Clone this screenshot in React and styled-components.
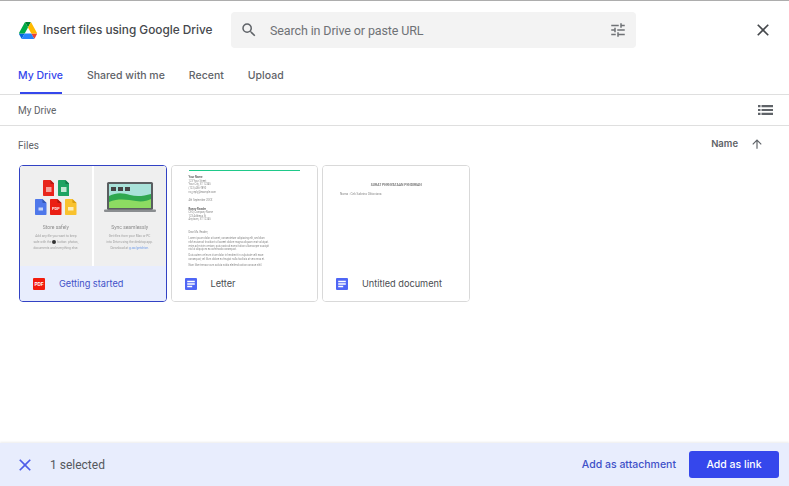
import React from "react";
import styled, { createGlobalStyle } from "styled-components";

const GlobalStyle = createGlobalStyle`
  html, body { margin: 0; padding: 0; background: #fff; }
  body { font-family: "Roboto", "Liberation Sans", sans-serif; }
`;

const tabs = ["My Drive", "Shared with me", "Recent", "Upload"];

const DriveLogo = () => (
  <svg width="18" height="17" viewBox="0 0 87.3 78" preserveAspectRatio="none">
    <path d="M6.6 66.85l3.85 6.65c.8 1.4 1.95 2.5 3.3 3.3L27.5 53H0c0 1.55.4 3.1 1.2 4.5z" fill="#0066da" />
    <path d="M43.65 25L29.9 1.2c-1.35.8-2.5 1.9-3.3 3.3L1.2 48.5A9 9 0 0 0 0 53h27.5z" fill="#00ac47" />
    <path d="M73.55 76.8c1.35-.8 2.5-1.9 3.3-3.3l1.6-2.75L86.1 57.5c.8-1.4 1.2-2.95 1.2-4.5H59.8l5.85 11.5z" fill="#ea4335" />
    <path d="M43.65 25L57.4 1.2C56.05.4 54.5 0 52.9 0H34.4c-1.6 0-3.15.45-4.5 1.2z" fill="#00832d" />
    <path d="M59.8 53H27.5L13.75 76.8c1.35.8 2.9 1.2 4.5 1.2h50.8c1.6 0 3.15-.45 4.5-1.2z" fill="#2684fc" />
    <path d="M73.4 26.5L60.7 4.5c-.8-1.4-1.95-2.5-3.3-3.3L43.65 25 59.8 53h27.45c0-1.55-.4-3.1-1.2-4.5z" fill="#ffba00" />
  </svg>
);

const SearchIcon = () => (
  <svg width="18" height="18" viewBox="0 0 24 24" fill="#5f6368">
    <path d="M15.5 14h-.79l-.28-.27A6.47 6.47 0 0 0 16 9.5 6.5 6.5 0 1 0 9.5 16c1.61 0 3.09-.59 4.23-1.57l.27.28v.79l5 4.99L20.49 19l-4.99-5zm-6 0C7.01 14 5 11.99 5 9.5S7.01 5 9.5 5 14 7.01 14 9.5 11.99 14 9.5 14z" />
  </svg>
);

const TuneIcon = () => (
  <svg width="18" height="18" viewBox="0 0 24 24" fill="#6f7276">
    <path d="M3 17v2h6v-2H3zM3 5v2h10V5H3zm10 16v-2h8v-2h-8v-2h-2v6h2zM7 9v2H3v2h4v2h2V9H7zm14 4v-2H11v2h10zm-6-4h2V7h4V5h-4V3h-2v6z" />
  </svg>
);

const CloseIcon = ({ color, size }) => (
  <svg width={size} height={size} viewBox="0 0 24 24" fill={color}>
    <path d="M19 6.41L17.59 5 12 10.59 6.41 5 5 6.41 10.59 12 5 17.59 6.41 19 12 13.41 17.59 19 19 17.59 13.41 12z" />
  </svg>
);

const ListIcon = () => (
  <svg width="15" height="10" viewBox="0 0 15 10" fill="#5f6368">
    <path d="M0 0h2.5v2.2H0zM3.5 0H15v2.2H3.5zM0 3.9h2.5v2.2H0zM3.5 3.9H15v2.2H3.5zM0 7.8h2.5V10H0zM3.5 7.8H15V10H3.5z" />
  </svg>
);

const ArrowUpIcon = () => (
  <svg width="14" height="14" viewBox="0 0 24 24" fill="#5f6368">
    <path d="M4 12l1.41 1.41L11 7.83V20h2V7.83l5.58 5.59L20 12l-8-8-8 8z" />
  </svg>
);

const DocIcon = () => (
  <svg width="12" height="12" viewBox="0 0 12 12">
    <rect width="12" height="12" rx="1" fill="#4f66f5" />
    <path d="M2.2 2.8h7.6v1.4H2.2zM2.2 5.3h7.6v1.4H2.2zM2.2 7.8h5v1.4h-5z" fill="#fff" />
  </svg>
);

const PdfIcon = () => (
  <svg width="12" height="12" viewBox="0 0 12 12">
    <rect width="12" height="12" rx="1" fill="#f21c0d" />
    <text x="6" y="7.8" textAnchor="middle" fontSize="4.6" fontWeight="700" fill="#fff" fontFamily="Liberation Sans">PDF</text>
  </svg>
);

const Sheet = ({ color, fold, children }) => (
  <svg width="11.5" height="16" viewBox="0 0 11.5 16">
    <path d="M.8 0h6.6l4.1 4.1v11.1a.8.8 0 0 1-.8.8H.8a.8.8 0 0 1-.8-.8V.8A.8.8 0 0 1 .8 0z" fill={color} />
    <path d="M7.4 0l4.1 4.1H8.2a.8.8 0 0 1-.8-.8z" fill={fold} />
    {children}
  </svg>
);

const LaptopArt = () => (
  <svg width="52" height="31" viewBox="0 0 52 31">
    <rect x="3" y="0" width="46" height="28" rx="1.5" fill="#5a5d60" />
    <rect x="5" y="2" width="42" height="24" fill="#a9e2d9" />
    <path d="M5 14c8-4 14-3 21-1s14 1 21-1v14H5z" fill="#2fa84f" />
    <path d="M5 20c10-4 19-2 27-1 6 1 11 0 15-2v9H5z" fill="#8ddb62" />
    <rect x="7" y="5" width="5" height="4" fill="#444" />
    <rect x="14" y="5" width="5" height="4" fill="#444" />
    <rect x="21" y="5" width="5" height="4" fill="#444" />
    <rect y="27.5" width="52" height="2.5" rx="1" fill="#8a8d90" />
  </svg>
);

const App = () => (
  <Page>
    <GlobalStyle />
    <Header>
      <Brand>
        <DriveLogo />
        <Title>Insert files using Google Drive</Title>
      </Brand>
      <Search>
        <SearchIcon />
        <SearchText>Search in Drive or paste URL</SearchText>
        <TuneIcon />
      </Search>
      <CloseButton><CloseIcon color="#45484c" size={20} /></CloseButton>
    </Header>

    <Tabs>
      {tabs.map((tab, i) => (
        <Tab key={tab} $active={i === 0}>{tab}</Tab>
      ))}
    </Tabs>

    <Crumbs>
      <CrumbText>My Drive</CrumbText>
      <ListIcon />
    </Crumbs>

    <Content>
      <SectionRow>
        <SectionLabel>Files</SectionLabel>
        <Sort>
          <SortLabel>Name</SortLabel>
          <ArrowUpIcon />
        </Sort>
      </SectionRow>

      <Grid>
        <Card $selected>
          <Thumb $split>
            <Pane>
              <Sheets>
                <SheetRow>
                  <Sheet color="#e8261c" fold="#b71c14">
                    <rect x="3" y="7" width="5.5" height="5" fill="#f6a49e" />
                  </Sheet>
                  <Sheet color="#1ea362" fold="#14784a">
                    <rect x="3" y="7" width="5.5" height="5" fill="#c2e8d4" />
                  </Sheet>
                </SheetRow>
                <SheetRow>
                  <Sheet color="#4f78ea" fold="#3558b8">
                    <rect x="3.5" y="8.5" width="4.5" height="3" fill="#c5d4f8" />
                  </Sheet>
                  <Sheet color="#ea1f14" fold="#b01810">
                    <text x="5.75" y="11" textAnchor="middle" fontSize="3.8" fontWeight="700" fill="#fff" fontFamily="Liberation Sans">PDF</text>
                  </Sheet>
                  <Sheet color="#f9c22e" fold="#d99f10">
                    <rect x="3" y="8" width="5.5" height="3.5" fill="#fdeebc" />
                  </Sheet>
                </SheetRow>
              </Sheets>
              <PaneTitle>Store safely</PaneTitle>
              <PaneText>Add any file you want to keep<br />safe with the <Dot /> button: photos,<br />documents and everything else.</PaneText>
            </Pane>
            <Pane>
              <Laptop><LaptopArt /></Laptop>
              <PaneTitle>Sync seamlessly</PaneTitle>
              <PaneText>Get files from your Mac or PC<br />into Drive using the desktop app.<br />Download at <Link>g.co/getdrive.</Link></PaneText>
            </Pane>
          </Thumb>
          <CardFooter $selected>
            <PdfIcon />
            <CardName $selected>Getting started</CardName>
          </CardFooter>
        </Card>

        <Card>
          <Thumb>
            <LetterRule />
            <LetterPage>
              <DocHead>Your Name</DocHead>
              <DocLine $gap={4.4}>123 Your Street<br />Your City, ST 12345<br />(123) 456-7890<br />no_reply@example.com</DocLine>
              <DocLine $gap={5.4}>4th September 20XX</DocLine>
              <DocHead>Ronny Reader</DocHead>
              <DocLine $gap={9.4}>CEO, Company Name<br />123 Address St<br />Anytown, ST 12345</DocLine>
              <DocLine $gap={2.4}>Dear Ms. Reader,</DocLine>
              <DocLine $gap={2.4}>Lorem ipsum dolor sit amet, consectetuer adipiscing elit, sed diam<br />nibh euismod tincidunt ut laoreet dolore magna aliquam erat volutpat.<br />enim ad minim veniam, quis nostrud exerci tation ullamcorper suscipit<br />nisl ut aliquip ex ea commodo consequat.</DocLine>
              <DocLine $gap={2.4}>Duis autem vel eum iriure dolor in hendrerit in vulputate velit esse<br />consequat, vel illum dolore eu feugiat nulla facilisis at vero eros et.</DocLine>
              <DocLine>Nam liber tempor cum soluta nobis eleifend option congue nihil.</DocLine>
            </LetterPage>
          </Thumb>
          <CardFooter>
            <DocIcon />
            <CardName>Letter</CardName>
          </CardFooter>
        </Card>

        <Card>
          <Thumb>
            <FormPage>
              <FormTitle>SURAT PERNYATAAN PENDIRIAN</FormTitle>
              <FormLine>Nama : Cek Sabrina Oktoviana</FormLine>
            </FormPage>
          </Thumb>
          <CardFooter>
            <DocIcon />
            <CardName>Untitled document</CardName>
          </CardFooter>
        </Card>
      </Grid>
    </Content>

    <ActionBar>
      <Selection>
        <CloseIcon color="#4f5ce8" size={20} />
        <SelectedText>1 selected</SelectedText>
      </Selection>
      <Actions>
        <TextButton>Add as attachment</TextButton>
        <PrimaryButton>Add as link</PrimaryButton>
      </Actions>
    </ActionBar>
  </Page>
);

export default App;

const Page = styled.div`
  width: 789px;
  height: 486px;
  display: flex;
  flex-direction: column;
  overflow: hidden;
  border-top: 1px solid #adadad;
  box-sizing: border-box;
  background: #fff;
`;

const Header = styled.div`
  height: 47px;
  flex: none;
  display: flex;
  align-items: flex-end;
  padding-left: 19px;
  padding-right: 16px;
`;

const Brand = styled.div`
  width: 212px;
  height: 36px;
  display: flex;
  align-items: center;
  gap: 6px;
`;

const Title = styled.div`
  font-family: "Inter", sans-serif;
  font-size: 11.8px;
  font-weight: 500;
  color: #45484c;
  white-space: nowrap;
`;

const Search = styled.div`
  width: 405px;
  height: 36px;
  box-sizing: border-box;
  display: flex;
  align-items: center;
  padding: 0 9px;
  background: #f3f3f3;
  border-radius: 4px;
`;

const SearchText = styled.div`
  flex: 1;
  margin-left: 12px;
  font-size: 12.5px;
  letter-spacing: -0.12px;
  color: #6f7276;
`;

const CloseButton = styled.div`
  height: 36px;
  margin-left: auto;
  display: flex;
  align-items: center;
`;

const Tabs = styled.div`
  height: 47px;
  flex: none;
  box-sizing: border-box;
  display: flex;
  gap: 24px;
  padding-left: 18px;
  border-bottom: 1px solid #dfdfdf;
`;

const Tab = styled.div`
  position: relative;
  height: 46px;
  padding-top: 21px;
  box-sizing: border-box;
  font-family: "Inter", sans-serif;
  font-size: 10.5px;
  font-weight: 500;
  line-height: 14px;
  color: ${(p) => (p.$active ? "#3547ec" : "#5f6368")};

  &::after {
    content: "";
    display: ${(p) => (p.$active ? "block" : "none")};
    position: absolute;
    left: 2px;
    right: 1px;
    bottom: 0;
    height: 2px;
    background: #3547ec;
  }
`;

const Crumbs = styled.div`
  height: 31px;
  flex: none;
  box-sizing: border-box;
  display: flex;
  align-items: center;
  justify-content: space-between;
  padding: 0 16px 0 18px;
  border-bottom: 1px solid #dfdfdf;
`;

const CrumbText = styled.div`
  font-size: 10px;
  color: #5f6368;
`;

const Content = styled.div`
  flex: 1;
  min-height: 0;
  padding: 0 18px;
`;

const SectionRow = styled.div`
  height: 39px;
  display: flex;
  align-items: center;
  justify-content: space-between;
`;

const SectionLabel = styled.div`
  font-size: 10px;
  color: #5f6368;
`;

const Sort = styled.div`
  display: flex;
  align-items: center;
  gap: 12px;
  padding-right: 7px;
  margin-top: -4px;
`;

const SortLabel = styled.div`
  font-family: "Inter", sans-serif;
  font-size: 9.5px;
  font-weight: 600;
  color: #5f6368;
`;

const Grid = styled.div`
  display: flex;
  gap: 4px;
  padding-left: 1px;
`;

const Card = styled.div`
  width: 147.5px;
  height: 137px;
  box-sizing: border-box;
  display: flex;
  flex-direction: column;
  overflow: hidden;
  border-radius: 4px;
  border: 1px solid ${(p) => (p.$selected ? "#3242c4" : "#d9d9d9")};
  background: #fff;
`;

const Thumb = styled.div`
  position: relative;
  height: 100px;
  flex: none;
  display: ${(p) => (p.$split ? "flex" : "block")};
  gap: 2px;
  background: #fff;
  overflow: hidden;
`;

const Pane = styled.div`
  flex: 1;
  background: #efefef;
  text-align: center;
  padding-top: 16px;
  filter: blur(0.3px);
`;

const Sheets = styled.div`
  display: flex;
  flex-direction: column;
  align-items: center;
  gap: 3px;
  height: 35px;
  margin-top: -2px;
  margin-bottom: 9px;
`;

const SheetRow = styled.div`
  display: flex;
  gap: 3.5px;
  height: 16px;
`;

const Laptop = styled.div`
  height: 31px;
  margin-bottom: 11px;
  margin-left: 1px;
`;

const PaneTitle = styled.div`
  font-size: 5px;
  line-height: 7px;
  color: #8c8c8c;
  margin-bottom: 3px;
`;

const PaneText = styled.div`
  font-size: 3.2px;
  line-height: 5.8px;
  color: #a0a0a0;
  white-space: nowrap;
`;

const Dot = styled.span`
  display: inline-block;
  width: 4px;
  height: 4px;
  border-radius: 50%;
  background: #333;
  vertical-align: -1px;
`;

const Link = styled.span`
  color: #6d9ae8;
`;

const LetterRule = styled.div`
  height: 1.3px;
  margin: 4px 17px 0 17px;
  background: #1fc98a;
`;

const LetterPage = styled.div`
  padding: 5px 0 0 17px;
  filter: blur(0.35px);
`;

const DocHead = styled.div`
  font-size: 2.8px;
  line-height: 3.6px;
  font-weight: 700;
  color: #666;
`;

const DocLine = styled.div`
  font-size: 2.6px;
  line-height: 3.6px;
  color: #8a8a8a;
  white-space: nowrap;
  margin-bottom: ${(p) => p.$gap ?? 0}px;
`;

const FormPage = styled.div`
  padding: 17px 0 0 17px;
  filter: blur(0.3px);
`;

const FormTitle = styled.div`
  font-size: 3.4px;
  line-height: 5px;
  color: #666;
  font-weight: 500;
  text-align: center;
  margin-bottom: 4px;
  padding-right: 28px;
  padding-left: 12px;
`;

const FormLine = styled.div`
  font-size: 3.1px;
  line-height: 4px;
  color: #8a8a8a;
  white-space: nowrap;
`;

const CardFooter = styled.div`
  flex: 1;
  display: flex;
  align-items: center;
  gap: 14px;
  padding-left: 13px;
  background: ${(p) => (p.$selected ? "#e8edfd" : "#fff")};
`;

const CardName = styled.div`
  font-family: "Inter", sans-serif;
  font-size: 9.2px;
  color: ${(p) => (p.$selected ? "#3f51c8" : "#4a4d51")};
`;

const ActionBar = styled.div`
  position: relative;
  margin-top: auto;
  height: 43px;
  flex: none;
  display: flex;
  align-items: center;
  justify-content: space-between;
  padding: 0 10px 0 15px;
  background: #e8edfd;
  box-shadow: 0 -1px 2px rgba(0, 0, 0, 0.08);
`;

const Selection = styled.div`
  display: flex;
  align-items: center;
  gap: 15px;
`;

const SelectedText = styled.div`
  font-size: 12px;
  color: #55585c;
`;

const Actions = styled.div`
  display: flex;
  align-items: center;
  gap: 13px;
`;

const TextButton = styled.div`
  font-family: "Inter", sans-serif;
  font-size: 10.5px;
  font-weight: 500;
  color: #3f51c8;
`;

const PrimaryButton = styled.div`
  width: 90px;
  height: 27px;
  display: flex;
  align-items: center;
  justify-content: center;
  border-radius: 3px;
  background: #3547ec;
  color: #fff;
  font-family: "Inter", sans-serif;
  font-size: 10.5px;
  font-weight: 500;
`;
